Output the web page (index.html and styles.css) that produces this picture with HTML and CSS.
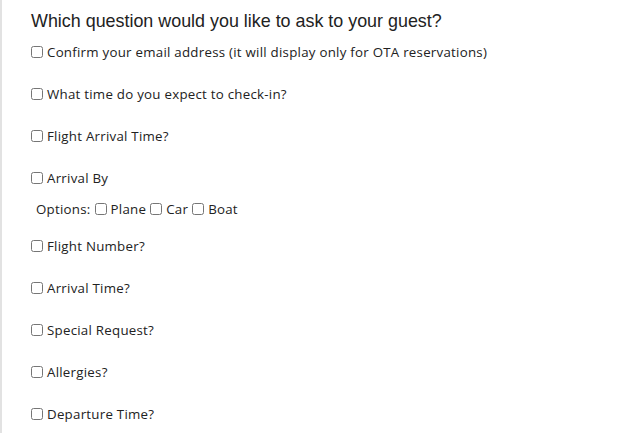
FILE: index.html
```html
<!DOCTYPE html>
<html>
<head>
<meta charset="utf-8">
<link rel="stylesheet" href="styles.css">
</head>
<body>
<div class="panel">
  <h3 class="title">Which question would you like to ask to your guest?</h3>
  <div class="list">
    <label class="item"><input type="checkbox"> Confirm your email address (it will display only for OTA reservations)</label>
    <label class="item"><input type="checkbox"> What time do you expect to check-in?</label>
    <label class="item"><input type="checkbox"> Flight Arrival Time?</label>
    <div class="group">
      <label class="item"><input type="checkbox"> Arrival By</label>
      <div class="options">Options:<label class="opt"><input type="checkbox"> Plane</label><label class="opt"><input type="checkbox"> Car</label><label class="opt"><input type="checkbox"> Boat</label></div>
    </div>
    <label class="item"><input type="checkbox"> Flight Number?</label>
    <label class="item"><input type="checkbox"> Arrival Time?</label>
    <label class="item"><input type="checkbox"> Special Request?</label>
    <label class="item"><input type="checkbox"> Allergies?</label>
    <label class="item"><input type="checkbox"> Departure Time?</label>
  </div>
</div>
</body>
</html>
```
FILE: styles.css
```css
html, body {
  margin: 0;
  padding: 0;
  background: #fff;
}
.panel {
  border-left: 2px solid #e2e2e2;
  min-height: 433px;
  box-sizing: border-box;
  padding: 8px 0 0 29px;
  color: #222;
  font-family: "Open Sans", "Noto Sans", sans-serif;
}
.title {
  margin: 0;
  font-family: "Liberation Sans", Arial, sans-serif;
  font-weight: 400;
  font-size: 17.9px;
  line-height: 27px;
  color: #222;
}
.list {
  display: flex;
  flex-direction: column;
  gap: 24px;
  margin-top: 8px;
}
.item, .opt {
  display: flex;
  align-items: center;
  font-size: 13.3px;
  line-height: 18px;
  letter-spacing: 0.25px;
  color: #222;
}
.item input, .opt input {
  width: 12px;
  height: 12px;
  margin: 0 4px 0 0;
  accent-color: #666;
}
.group {
  display: flex;
  flex-direction: column;
  gap: 13px;
}
.options {
  display: flex;
  align-items: center;
  padding-left: 5px;
  margin-bottom: -5px;
  font-size: 13.3px;
  line-height: 18px;
  letter-spacing: 0.25px;
}
.opt {
  margin-left: 4px;
}
.opt input {
  margin-right: 4px;
}
```
